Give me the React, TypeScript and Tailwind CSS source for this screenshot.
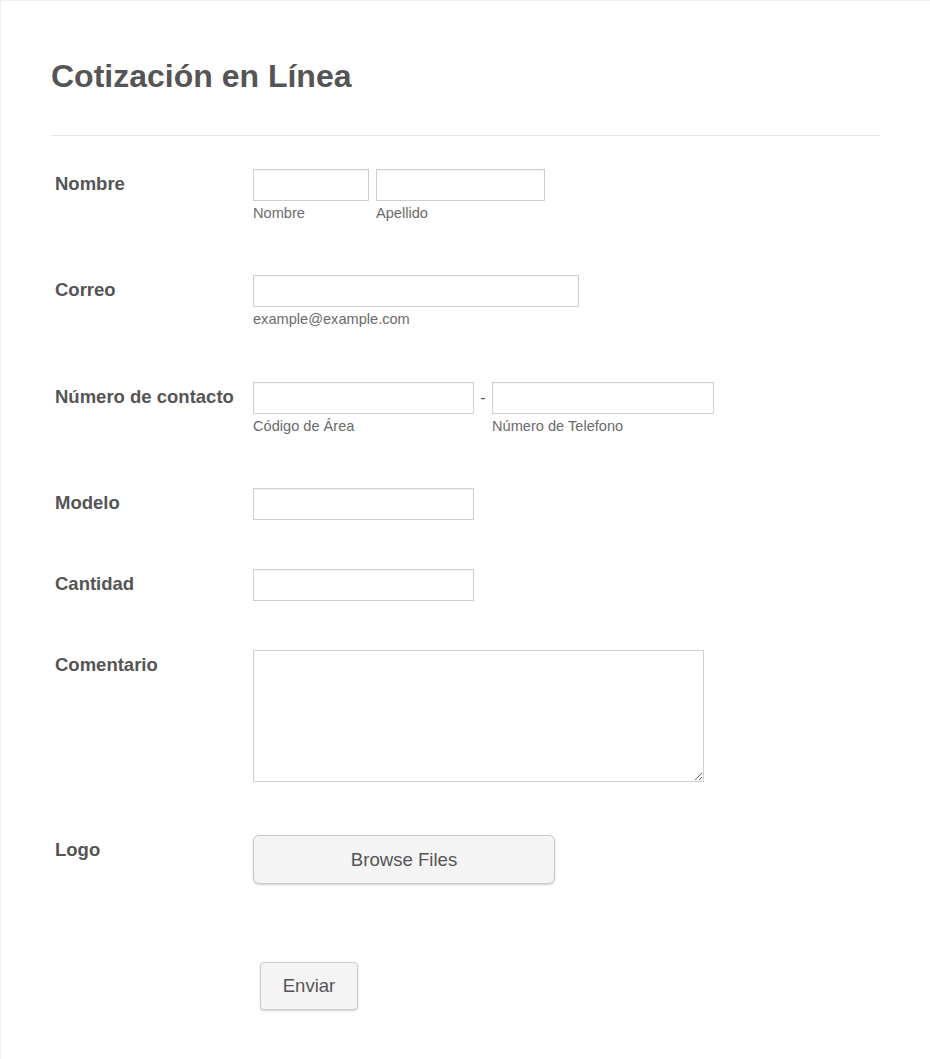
const font = { fontFamily: '"Liberation Sans", Arial, sans-serif' };

const inputCls =
  "h-[32px] border border-[#cfcfcf] bg-white shadow-[inset_0_1px_1px_rgba(0,0,0,0.04)] outline-none";

function Label({ children }: { children: React.ReactNode }) {
  return (
    <div className="w-[202px] shrink-0 pl-[4px] pt-[3px] text-[18.5px] font-bold leading-[24px] text-[#555]">
      {children}
    </div>
  );
}

function Sub({ children }: { children: React.ReactNode }) {
  return (
    <div className="mt-[2px] text-[14.6px] leading-[20px] text-[#6b6b6b]">
      {children}
    </div>
  );
}

export default function App() {
  return (
    <div
      style={font}
      className="min-h-screen w-full border-t border-l border-[#f0f0f0] bg-white"
    >
      <div className="w-full px-[50px] pb-[40px]">
        <h1 className="mt-[56px] text-[32px] font-bold leading-[38px] text-[#555]">
          Cotización en Línea
        </h1>
        <div className="mt-[40px] border-t border-[#e6e6e6]" />

        {/* Nombre */}
        <div className="mt-[33px] flex">
          <Label>Nombre</Label>
          <div className="flex gap-[7px]">
            <div>
              <input className={`${inputCls} w-[116px]`} />
              <Sub>Nombre</Sub>
            </div>
            <div>
              <input className={`${inputCls} w-[169px]`} />
              <Sub>Apellido</Sub>
            </div>
          </div>
        </div>

        {/* Correo */}
        <div className="mt-[52px] flex">
          <Label>Correo</Label>
          <div>
            <input className={`${inputCls} w-[326px]`} />
            <Sub>example@example.com</Sub>
          </div>
        </div>

        {/* Numero */}
        <div className="mt-[53px] flex">
          <Label>Número de contacto</Label>
          <div className="flex">
            <div>
              <input className={`${inputCls} w-[221px]`} />
              <Sub>Código de Área</Sub>
            </div>
            <div className="w-[18px] pt-[6px] text-center text-[16px] leading-[20px] text-[#555]">
              -
            </div>
            <div>
              <input className={`${inputCls} w-[222px]`} />
              <Sub>Número de Telefono</Sub>
            </div>
          </div>
        </div>

        {/* Modelo */}
        <div className="mt-[52px] flex">
          <Label>Modelo</Label>
          <input className={`${inputCls} w-[221px]`} />
        </div>

        {/* Cantidad */}
        <div className="mt-[49px] flex">
          <Label>Cantidad</Label>
          <input className={`${inputCls} w-[221px]`} />
        </div>

        {/* Comentario */}
        <div className="mt-[49px] flex">
          <Label>Comentario</Label>
          <textarea className="block h-[132px] w-[451px] border border-[#cfcfcf] bg-white outline-none" />
        </div>

        {/* Logo */}
        <div className="mt-[53px] flex">
          <Label>Logo</Label>
          <button className="h-[49px] w-[302px] rounded-[6px] border border-[#c8c8c8] bg-[#f4f4f4] text-[18.6px] text-[#555] shadow-[0_1px_2px_rgba(0,0,0,0.18)]">
            Browse Files
          </button>
        </div>

        {/* Enviar */}
        <div className="mt-[78px] flex pl-[209px]">
          <button className="h-[48px] w-[98px] rounded-[4px] border border-[#cccccc] bg-[#f4f4f4] text-[18.5px] text-[#555] shadow-[0_1px_2px_rgba(0,0,0,0.18)]">
            Enviar
          </button>
        </div>
      </div>
    </div>
  );
}
